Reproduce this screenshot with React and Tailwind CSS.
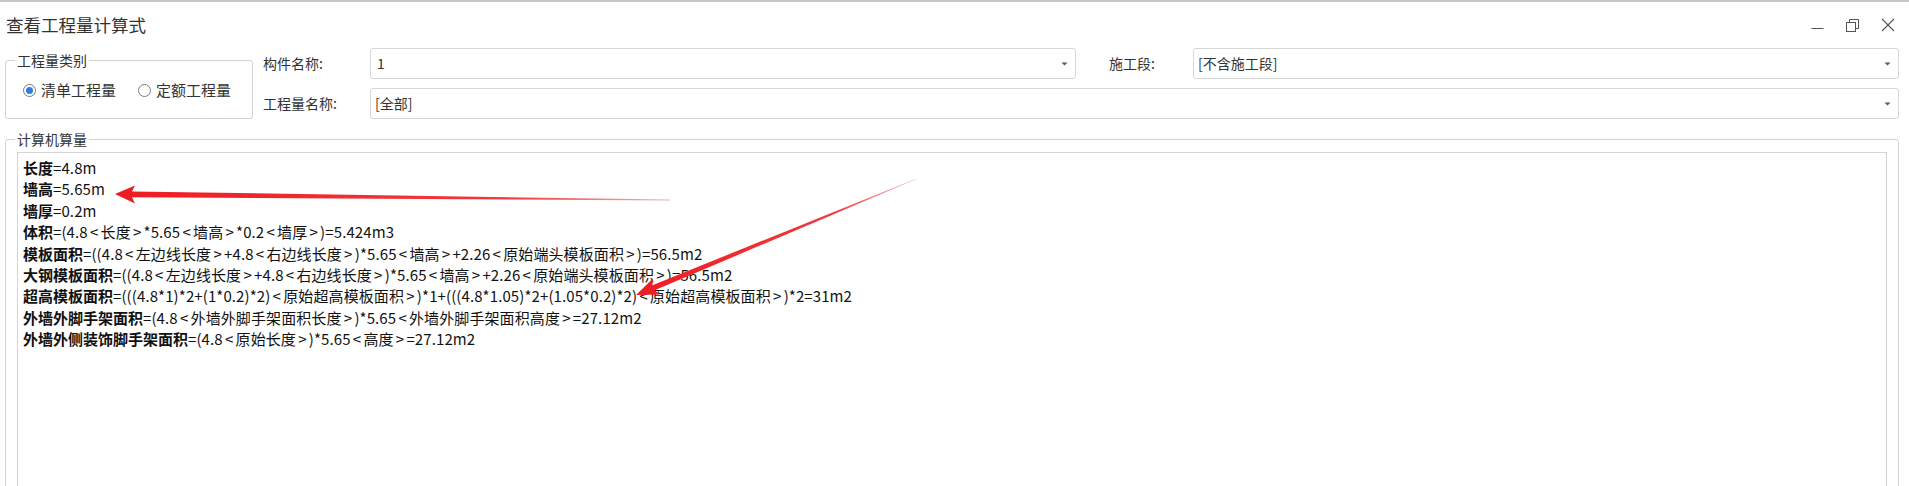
import React from "react";

const lines = [
  ["长度", "=4.8m"],
  ["墙高", "=5.65m"],
  ["墙厚", "=0.2m"],
  ["体积", "=(4.8<长度>*5.65<墙高>*0.2<墙厚>)=5.424m3"],
  ["模板面积", "=((4.8<左边线长度>+4.8<右边线长度>)*5.65<墙高>+2.26<原始端头模板面积>)=56.5m2"],
  ["大钢模板面积", "=((4.8<左边线长度>+4.8<右边线长度>)*5.65<墙高>+2.26<原始端头模板面积>)=56.5m2"],
  ["超高模板面积", "=(((4.8*1)*2+(1*0.2)*2)<原始超高模板面积>)*1+(((4.8*1.05)*2+(1.05*0.2)*2)<原始超高模板面积>)*2=31m2"],
  ["外墙外脚手架面积", "=(4.8<外墙外脚手架面积长度>)*5.65<外墙外脚手架面积高度>=27.12m2"],
  ["外墙外侧装饰脚手架面积", "=(4.8<原始长度>)*5.65<高度>=27.12m2"],
];

function Caret() {
  return (
    <svg width="7" height="4" viewBox="0 0 7 4" className="shrink-0">
      <path d="M0.5 0.5 L6.5 0.5 L3.5 3.5 Z" fill="#555" />
    </svg>
  );
}

function Radio({ checked, label }) {
  return (
    <div className="flex items-center gap-[5px]">
      <div className="w-[13px] h-[13px] rounded-full border border-[#7a7a7a] bg-white flex items-center justify-center">
        {checked && <div className="w-[7px] h-[7px] rounded-full bg-[#2f7de1]" />}
      </div>
      <span className="text-[15px] leading-[20px] text-[#333]">{label}</span>
    </div>
  );
}

function Value({ text }) {
  const parts = text.split(/([<>])/);
  return (
    <span className="tracking-[0.1px]">
      {parts.map((p, i) =>
        p === "<" || p === ">" ? (
          <span key={i} className="mx-[2.2px]">{p}</span>
        ) : (
          <span key={i}>{p}</span>
        )
      )}
    </span>
  );
}

export default function App() {
  return (
    <div className="relative w-[1909px] h-[486px] overflow-hidden bg-white border-t-2 border-[#c6c6c6] font-['Noto_Sans_CJK_SC','Noto_Sans',sans-serif] text-[#333]">
      {/* title bar */}
      <div className="h-[46px] flex items-center pl-[6px] pr-[14px]">
        <span className="text-[17.5px] leading-none text-[#333]">查看工程量计算式</span>
        <div className="ml-auto flex items-center gap-[22px]">
          <svg width="13" height="13" viewBox="0 0 13 13">
            <path d="M0.5 9.5 H12.5" stroke="#555" strokeWidth="1" />
          </svg>
          <svg width="13" height="13" viewBox="0 0 13 13">
            <rect x="0.5" y="3.5" width="9" height="9" fill="none" stroke="#555" />
            <path d="M3.5 3.5 V0.5 H12.5 V9.5 H9.5" fill="none" stroke="#555" />
          </svg>
          <svg width="14" height="14" viewBox="0 0 14 14">
            <path d="M1 1 L13 13 M13 1 L1 13" stroke="#555" strokeWidth="1.1" />
          </svg>
        </div>
      </div>

      {/* filter row */}
      <div className="flex pl-[5px] h-[71px]">
        <fieldset className="w-[248px] h-[68px] mt-[3px] border border-[#d2d2d2] rounded-[3px]">
          <legend className="ml-[9px] px-[2px] text-[14px] leading-[18px] text-[#333]">工程量类别</legend>
          <div className="h-[42px] flex items-center pl-[17px] gap-[22px]">
            <Radio checked label="清单工程量" />
            <Radio label="定额工程量" />
          </div>
        </fieldset>

        <div className="ml-[10px] flex flex-col gap-[9px]">
          <div className="flex items-center h-[31px]">
            <span className="w-[107px] text-[14px] text-[#333]">构件名称:</span>
            <div className="w-[706px] h-[31px] border border-[#d6d6d6] rounded-[3px] flex items-center pl-[6px] pr-[7px]">
              <span className="text-[14px] text-[#333]">1</span>
              <span className="ml-auto"><Caret /></span>
            </div>
            <span className="ml-[33px] w-[84px] text-[14px] text-[#333]">施工段:</span>
            <div className="w-[706px] h-[31px] border border-[#d6d6d6] rounded-[3px] flex items-center pl-[4px] pr-[7px]">
              <span className="text-[14px] text-[#333]">[不含施工段]</span>
              <span className="ml-auto"><Caret /></span>
            </div>
          </div>
          <div className="flex items-center h-[31px]">
            <span className="w-[107px] text-[14px] text-[#333]">工程量名称:</span>
            <div className="w-[1529px] h-[31px] border border-[#d6d6d6] rounded-[3px] flex items-center pl-[4px] pr-[7px]">
              <span className="text-[14px] text-[#333]">[全部]</span>
              <span className="ml-auto"><Caret /></span>
            </div>
          </div>
        </div>
      </div>

      {/* calc group */}
      <fieldset className="ml-[5px] mt-[11px] w-[1894px] h-[420px] border border-[#d2d2d2] rounded-[3px]">
        <legend className="ml-[9px] px-[2px] text-[14px] leading-[18px] text-[#333]">计算机算量</legend>
        <div className="ml-[11px] mr-[11px] mt-[4px] h-[400px] border border-[#d4d4d4] pt-[4px] pl-[5px] text-[15px] leading-[21.4px] text-[#111]">
          {lines.map(([k, v]) => (
            <div key={k} className="whitespace-pre">
              <span className="font-bold">{k}</span>
              <Value text={v} />
            </div>
          ))}
        </div>
      </fieldset>

      {/* red annotation arrows */}
      <svg className="absolute left-0 top-0 pointer-events-none" width="1909" height="486">
        <defs>
          <linearGradient id="g1" gradientUnits="userSpaceOnUse" x1="115" y1="192" x2="670" y2="198">
            <stop offset="0" stopColor="#ee1c22" />
            <stop offset="0.7" stopColor="#f03a3e" />
            <stop offset="1" stopColor="#f8b0b2" />
          </linearGradient>
          <linearGradient id="g2" gradientUnits="userSpaceOnUse" x1="636" y1="293" x2="916" y2="177">
            <stop offset="0" stopColor="#ee1c22" />
            <stop offset="0.7" stopColor="#f03a3e" />
            <stop offset="1" stopColor="#f8c0c2" />
          </linearGradient>
        </defs>
        <polygon
          fill="url(#g1)"
          points="115,192 135,183.5 132,189.4 670,197.6 670,198.4 132,195.2 135,201.5"
        />
        <polygon
          fill="url(#g2)"
          points="636,293 653,276.5 652.4,283.2 915.9,176.7 916.1,177.3 654.6,288.3 660,292.6"
        />
      </svg>
    </div>
  );
}
